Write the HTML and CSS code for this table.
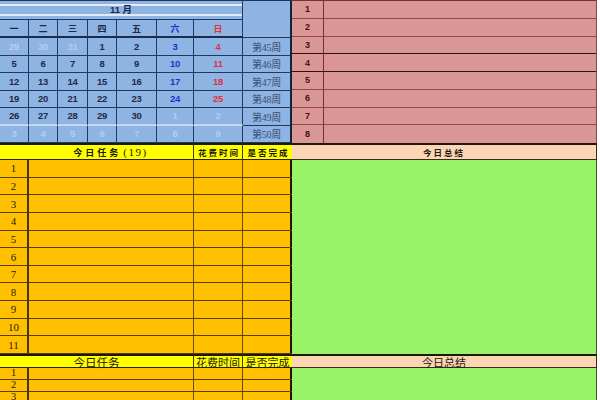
FILE: index.html
```html
<!DOCTYPE html>
<html lang="zh">
<head>
<meta charset="utf-8">
<title>日计划</title>
<link rel="stylesheet" href="styles.css">
</head>
<body>
<div class="page">
  <section class="top">
    <div class="cal">
      <div class="c title"><div class="title-in">11 月</div></div>
      <div class="c wk wk-head"></div>
      <div class="c hd">一</div><div class="c hd">二</div><div class="c hd">三</div><div class="c hd">四</div><div class="c hd">五</div><div class="c hd sat">六</div><div class="c hd sun">日</div>

      <div class="c d fade">29</div><div class="c d fade">30</div><div class="c d fade">31</div><div class="c d">1</div><div class="c d">2</div><div class="c d sat">3</div><div class="c d sun">4</div><div class="c wk">第45周</div>
      <div class="c d">5</div><div class="c d">6</div><div class="c d">7</div><div class="c d">8</div><div class="c d">9</div><div class="c d sat">10</div><div class="c d sun">11</div><div class="c wk">第46周</div>
      <div class="c d">12</div><div class="c d">13</div><div class="c d">14</div><div class="c d">15</div><div class="c d">16</div><div class="c d sat">17</div><div class="c d sun">18</div><div class="c wk">第47周</div>
      <div class="c d">19</div><div class="c d">20</div><div class="c d">21</div><div class="c d">22</div><div class="c d">23</div><div class="c d sat">24</div><div class="c d sun">25</div><div class="c wk">第48周</div>
      <div class="c d lt">26</div><div class="c d lt">27</div><div class="c d lt">28</div><div class="c d lt">29</div><div class="c d lt">30</div><div class="c d lt fade">1</div><div class="c d lt fade">2</div><div class="c wk">第49周</div>
      <div class="c d fade">3</div><div class="c d fade">4</div><div class="c d fade">5</div><div class="c d fade">6</div><div class="c d fade">7</div><div class="c d fade">8</div><div class="c d fade">9</div><div class="c wk">第50周</div>
    </div>
    <div class="notes">
      <div class="n">1</div><div class="nb"></div>
      <div class="n">2</div><div class="nb"></div>
      <div class="n dk">3</div><div class="nb dk"></div>
      <div class="n dk">4</div><div class="nb dk"></div>
      <div class="n">5</div><div class="nb"></div>
      <div class="n">6</div><div class="nb"></div>
      <div class="n">7</div><div class="nb"></div>
      <div class="n last">8</div><div class="nb last"></div>
    </div>
  </section>

  <section class="day">
    <div class="tasks">
      <div class="th th-title">今日任务 <span class="cnt">(19)</span></div>
      <div class="th th-sm">花费时间</div>
      <div class="th th-sm">是否完成</div>
      <div class="num">1</div><div class="t"></div><div class="t"></div><div class="t"></div>
      <div class="num">2</div><div class="t"></div><div class="t"></div><div class="t"></div>
      <div class="num">3</div><div class="t"></div><div class="t"></div><div class="t"></div>
      <div class="num">4</div><div class="t"></div><div class="t"></div><div class="t"></div>
      <div class="num">5</div><div class="t"></div><div class="t"></div><div class="t"></div>
      <div class="num">6</div><div class="t"></div><div class="t"></div><div class="t"></div>
      <div class="num">7</div><div class="t"></div><div class="t"></div><div class="t"></div>
      <div class="num">8</div><div class="t"></div><div class="t"></div><div class="t"></div>
      <div class="num">9</div><div class="t"></div><div class="t"></div><div class="t"></div>
      <div class="num">10</div><div class="t"></div><div class="t"></div><div class="t"></div>
      <div class="num">11</div><div class="t"></div><div class="t"></div><div class="t"></div>
    </div>
    <div class="summary">
      <div class="sh">今日总结</div>
      <div class="sb"></div>
    </div>
  </section>

  <section class="day small">
    <div class="tasks">
      <div class="th th-title2">今日任务</div>
      <div class="th th-reg">花费时间</div>
      <div class="th th-reg">是否完成</div>
      <div class="num">1</div><div class="t"></div><div class="t"></div><div class="t"></div>
      <div class="num">2</div><div class="t"></div><div class="t"></div><div class="t"></div>
      <div class="num">3</div><div class="t"></div><div class="t"></div><div class="t"></div>
      <div class="num">4</div><div class="t"></div><div class="t"></div><div class="t"></div>
    </div>
    <div class="summary">
      <div class="sh sh-reg">今日总结</div>
      <div class="sb"></div>
    </div>
  </section>
</div>
</body>
</html>
```

FILE: styles.css
```css
* { box-sizing: border-box; }
body {
  margin: 0;
  background: #fff;
  font-family: "Liberation Sans", "Noto Sans CJK SC", sans-serif;
}
.page { width: 597px; }

/* ---------- top: calendar + notes ---------- */
.top { display: flex; height: 143px; }

.cal {
  width: 292px;
  display: grid;
  grid-template-columns: 29px 29px 30px 29px 40px 37px 49px 49px;
  grid-template-rows: 19px 18px repeat(6, 1fr);
  background: #8eb4e3;
  border-top: 1px solid #1f3558;
}
.c {
  display: flex;
  align-items: center;
  justify-content: center;
  border-right: 1px solid #22385c;
  border-bottom: 1px solid #22385c;
  color: #1c2a48;
  font-size: 9.5px;
  font-weight: bold;
}
.title {
  grid-column: 1 / 8;
  display: block;
  padding-top: 3px;
}
.title-in {
  height: 12px;
  border-top: 2px solid #e2ebf7;
  border-bottom: 2px solid #e2ebf7;
  font-size: 9.5px;
  line-height: 8px;
  text-align: center;
  color: #1c2a48;
}
.wk {
  border-right: 2px solid #14233c;
  font-weight: normal;
  color: #3a4f70;
  font-family: "Liberation Serif", "Noto Sans CJK SC", serif;
  font-size: 10px;
  letter-spacing: -0.3px;
}
.wk-head { grid-row: 1 / 3; grid-column: 8; }
.hd { font-family: "Noto Sans CJK SC", sans-serif; font-size: 9px; border-bottom: 2px solid #1b2d4b; }
.d { font-size: 9.5px; letter-spacing: -0.2px; }
.lt { border-bottom: 2px solid #c7d8ee; }
.sat { color: #1834cc; }
.sun { color: #e0303c; }
.fade { color: #b8cdea; }

.notes {
  flex: 1;
  display: grid;
  grid-template-columns: 32px 1fr;
  grid-template-rows: repeat(8, 1fr);
  background: #da9694;
  border-top: 1px solid #7a3030;
  border-right: 1px solid #8a4a4a;
}
.n, .nb { border-bottom: 1px solid #8e4846; }
.n {
  display: flex;
  align-items: center;
  justify-content: center;
  border-right: 1px solid #7a2e2e;
  font-size: 9px;
  font-weight: bold;
  color: #3c1414;
}
.dk { border-bottom: 1px solid #2a1010; }
.last { border-bottom: none; }

/* ---------- day blocks ---------- */
.day { display: flex; }

.tasks {
  width: 292px;
  display: grid;
  grid-template-columns: 29px 165px 49px 49px;
  grid-template-rows: 17px;
  grid-auto-rows: 17.65px;
  background: #ffc000;
  border-right: 2px solid #1c1408;
}
.th {
  display: flex;
  align-items: center;
  justify-content: center;
  background: #ffff00;
  border-top: 2px solid #1a1a0a;
  border-bottom: 1px solid #2a2206;
  border-right: 1px solid #4a3a0a;
  font-family: "Noto Sans CJK SC", sans-serif;
  color: #1a1a0a;
}
.th:nth-child(3) { border-right: none; }
.th-title {
  grid-column: 1 / 3;
  padding-left: 28px;
  font-size: 9px;
  font-weight: bold;
  letter-spacing: 3px;
}
.cnt {
  font-family: "Liberation Serif", serif;
  font-size: 11px;
  font-weight: normal;
  letter-spacing: 1.5px;
  margin-left: 2px;
}
.th-sm { font-size: 8.5px; font-weight: bold; letter-spacing: 2px; padding-left: 2px; }
.th-title2 { grid-column: 1 / 3; font-size: 11.5px; }
.th-reg { font-size: 11px; letter-spacing: 0; }

.num, .t { border-bottom: 1px solid #5b3c11; }
.num {
  display: flex;
  align-items: center;
  justify-content: center;
  border-right: 2px solid #4a3210;
  font-family: "Liberation Serif", serif;
  font-size: 11px;
  color: #2a2000;
}
.t { border-right: 1px solid #6b4a16; }
.t:nth-child(4n+3) { border-right: none; }

.summary { flex: 1; display: flex; flex-direction: column; }
.sh {
  height: 17px;
  display: flex;
  align-items: center;
  justify-content: center;
  background: #fcd5b4;
  border-top: 2px solid #1a1a0a;
  border-bottom: 1px solid #3a2a1a;
  border-right: 1px solid #3a2a1a;
  font-family: "Noto Sans CJK SC", sans-serif;
  font-size: 8.5px;
  font-weight: bold;
  letter-spacing: 2px;
  color: #1a1a0a;
}
.sb { flex: 1; background: #9af266; border-right: 1px solid #3a5a2a; }

.small .tasks { grid-template-rows: 14px; grid-auto-rows: 12px; }
.small .sh { height: 14px; }
.small .num { font-size: 10.5px; line-height: 1; }
.sh-reg { font-size: 11px; font-weight: normal; letter-spacing: 0; }
```
